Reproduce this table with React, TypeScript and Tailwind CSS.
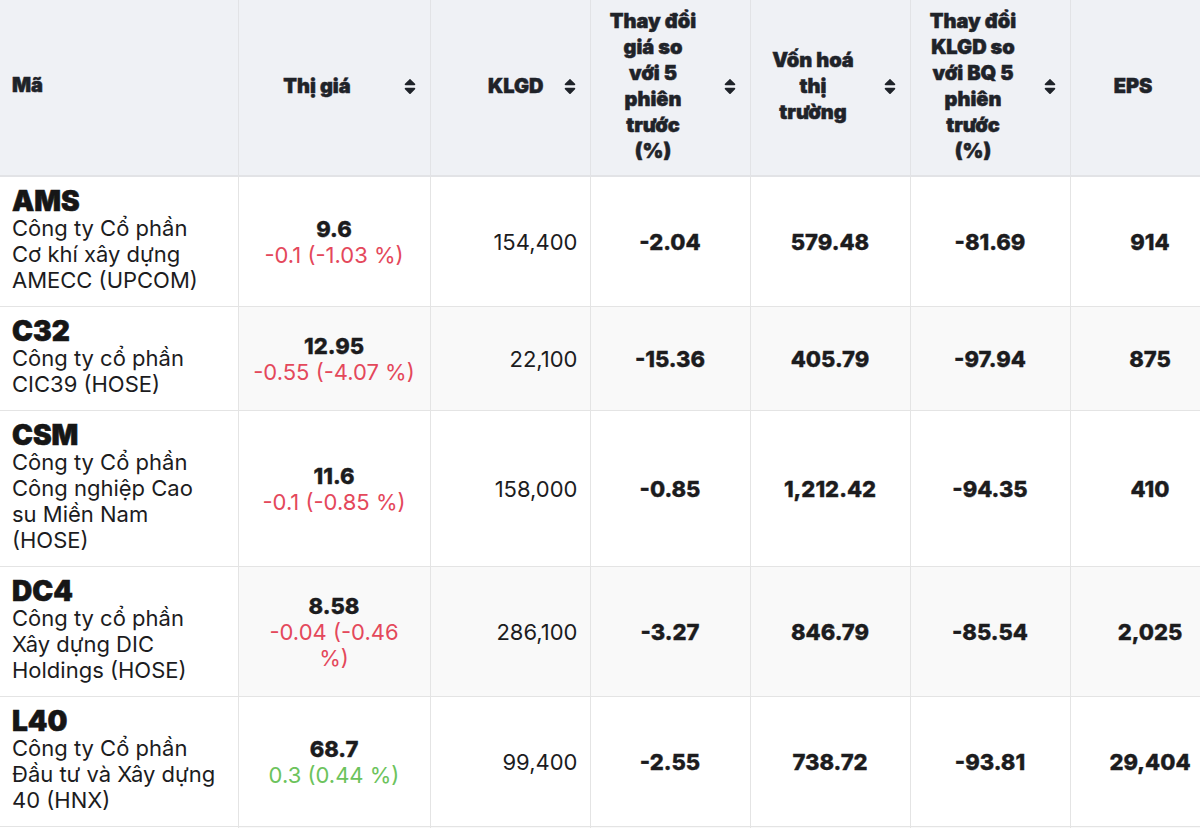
import React from "react";
import { FaSort } from "react-icons/fa";

type Row = {
  t: string;
  name: string[];
  price: string;
  chg: string[];
  up?: boolean;
  vol: string;
  c5: string;
  cap: string;
  v5: string;
  eps: string;
};

const rows: Row[] = [
  { t: "AMS", name: ["Công ty Cổ phần", "Cơ khí xây dựng", "AMECC (UPCOM)"], price: "9.6", chg: ["-0.1 (-1.03 %)"], vol: "154,400", c5: "-2.04", cap: "579.48", v5: "-81.69", eps: "914" },
  { t: "C32", name: ["Công ty cổ phần", "CIC39 (HOSE)"], price: "12.95", chg: ["-0.55 (-4.07 %)"], vol: "22,100", c5: "-15.36", cap: "405.79", v5: "-97.94", eps: "875" },
  { t: "CSM", name: ["Công ty Cổ phần", "Công nghiệp Cao", "su Miền Nam", "(HOSE)"], price: "11.6", chg: ["-0.1 (-0.85 %)"], vol: "158,000", c5: "-0.85", cap: "1,212.42", v5: "-94.35", eps: "410" },
  { t: "DC4", name: ["Công ty cổ phần", "Xây dựng DIC", "Holdings (HOSE)"], price: "8.58", chg: ["-0.04 (-0.46", "%)"], vol: "286,100", c5: "-3.27", cap: "846.79", v5: "-85.54", eps: "2,025" },
  { t: "L40", name: ["Công ty Cổ phần", "Đầu tư và Xây dựng", "40 (HNX)"], price: "68.7", chg: ["0.3 (0.44 %)"], up: true, vol: "99,400", c5: "-2.55", cap: "738.72", v5: "-93.81", eps: "29,404" },
];

function Lines({ lines }: { lines: string[] }) {
  return (
    <>
      {lines.map((l, i) => (
        <div key={i} className="whitespace-nowrap">
          {l}
        </div>
      ))}
    </>
  );
}

function SortHead({ lines, align = "center" }: { lines: string[]; align?: "center" | "right" }) {
  return (
    <th className="bg-[#eff1f5] border-r border-b-2 border-[#e2e3e6] pl-3 pr-[14px] pt-[7px] pb-[10px] align-middle font-black [-webkit-text-stroke:0.5px_#1f2329]">
      <div className="flex items-center gap-[20px]">
        <div className={align === "right" ? "flex-1 text-right" : "flex-1 text-center"}>
          <Lines lines={lines} />
        </div>
        <FaSort className="w-[12px] h-[19px] shrink-0 text-[#1f2329]" />
      </div>
    </th>
  );
}

export default function App() {
  return (
    <div
      className="w-[1200px] h-[828px] overflow-hidden bg-white text-[#1c1c1e]"
      style={{ fontFamily: "Inter, 'Noto Sans', 'Liberation Sans', sans-serif" }}
    >
      <table className="table-fixed w-[1230px] border-collapse text-[22px] leading-[26px]">
        <colgroup>
          <col className="w-[238px]" />
          <col className="w-[192px]" />
          <col className="w-[160px]" />
          <col className="w-[160px]" />
          <col className="w-[160px]" />
          <col className="w-[160px]" />
          <col className="w-[160px]" />
        </colgroup>
        <thead className="text-[#1f2329] text-[20px] leading-[26px]">
          <tr className="h-[176px]">
            <th className="bg-[#eff1f5] border-r border-b-2 border-[#e2e3e6] px-3 pb-[5px] text-left align-middle font-black [-webkit-text-stroke:0.5px_#1f2329]">
              Mã
            </th>
            <SortHead lines={["Thị giá"]} />
            <SortHead lines={["KLGD"]} align="right" />
            <SortHead lines={["Thay đổi", "giá so", "với 5", "phiên", "trước", "(%)"]} />
            <SortHead lines={["Vốn hoá", "thị", "trường"]} />
            <SortHead lines={["Thay đổi", "KLGD so", "với BQ 5", "phiên", "trước", "(%)"]} />
            <SortHead lines={["EPS"]} />
          </tr>
        </thead>
        <tbody>
          {rows.map((r, i) => {
            const bg = i % 2 === 1 ? "bg-[#f9f9f9]" : "bg-white";
            const cell = `${bg} border-r border-b border-[#e4e4e4] px-3 align-middle`;
            const bold = "font-extrabold [-webkit-text-stroke:0.35px_#1c1c1e]";
            return (
              <tr key={r.t}>
                <td className="bg-white border-r border-b border-[#e4e4e4] pl-3 pr-1 pt-[10px] pb-[13px] align-top">
                  <div className="text-[28px] leading-[28px] font-black text-[#161616] [-webkit-text-stroke:0.6px_#161616]">{r.t}</div>
                  <Lines lines={r.name} />
                </td>
                <td className={`${cell} text-center`}>
                  <div className={bold}>{r.price}</div>
                  <div className={r.up ? "text-[#6cc35c]" : "text-[#e4485b]"}>
                    <Lines lines={r.chg} />
                  </div>
                </td>
                <td className={`${cell} text-right`}>{r.vol}</td>
                <td className={`${cell} text-center ${bold}`}>{r.c5}</td>
                <td className={`${cell} text-center ${bold}`}>{r.cap}</td>
                <td className={`${cell} text-center ${bold}`}>{r.v5}</td>
                <td className={`${cell} text-center ${bold}`}>{r.eps}</td>
              </tr>
            );
          })}
          <tr className="h-[60px]">
            <td className="bg-white border-r border-b border-[#e4e4e4]" />
            <td className="bg-[#f9f9f9] border-r border-b border-[#e4e4e4]" />
            <td className="bg-[#f9f9f9] border-r border-b border-[#e4e4e4]" />
            <td className="bg-[#f9f9f9] border-r border-b border-[#e4e4e4]" />
            <td className="bg-[#f9f9f9] border-r border-b border-[#e4e4e4]" />
            <td className="bg-[#f9f9f9] border-r border-b border-[#e4e4e4]" />
            <td className="bg-[#f9f9f9] border-r border-b border-[#e4e4e4]" />
          </tr>
        </tbody>
      </table>
    </div>
  );
}
